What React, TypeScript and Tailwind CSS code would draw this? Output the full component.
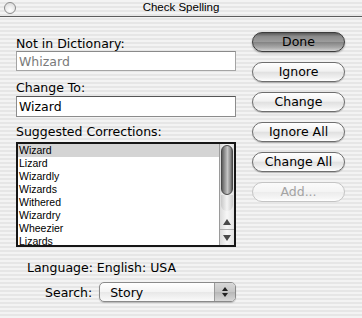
import React from "react";

const suggestions = ["Wizard", "Lizard", "Wizardly", "Wizards", "Withered", "Wizardry", "Wheezier", "Lizards"];

const font = "font-['DejaVu_Sans',sans-serif]";
const pin = "bg-[repeating-linear-gradient(180deg,#f3f3f3_0px,#f3f3f3_2px,#e6e6e6_2px,#e6e6e6_4px)]";

function AquaButton({ label, kind = "normal" }: { label: string; kind?: "default" | "normal" | "disabled" }) {
  const look =
    kind === "default"
      ? "border-[#3c3c3c] text-black bg-[linear-gradient(180deg,#5a5a5a_0%,#8c8c8c_20%,#9c9c9c_48%,#848484_52%,#a8a8a8_80%,#d2d2d2_100%)] shadow-[0_1px_2px_rgba(0,0,0,0.35)]"
      : kind === "disabled"
        ? "border-[#c4c4c4] text-[#a3a3a3] bg-[linear-gradient(180deg,#fbfbfb_0%,#f4f4f4_48%,#ececec_52%,#f6f6f6_85%,#ffffff_100%)]"
        : "border-[#6e6e6e] text-black bg-[linear-gradient(180deg,#ffffff_0%,#f1f1f1_45%,#e1e1e1_52%,#efefef_80%,#ffffff_100%)] shadow-[0_1px_1px_rgba(0,0,0,0.25)]";
  return (
    <div className={`h-[20px] w-[93px] rounded-full border flex items-center justify-center text-[12.5px] leading-none ${look}`}>
      {label}
    </div>
  );
}

export default function App() {
  return (
    <div className={`w-[362px] h-[318px] overflow-hidden ${pin} ${font} text-[12.5px] leading-[15px] text-black`}>
      {/* title bar */}
      <div className="relative h-[17px] border-b border-[#5c5c5c] flex items-center justify-center">
        <div className="absolute left-[4px] top-[2px] w-[12px] h-[12px] rounded-full border border-[#8a8a8a] bg-[radial-gradient(circle_at_50%_70%,#ffffff,#d6d6d6)]" />
        <span className="font-['Liberation_Sans',sans-serif] text-[11.5px] leading-none">Check Spelling</span>
      </div>

      <div className="flex">
        {/* left column */}
        <div className="ml-[16px] w-[220px] flex flex-col">
          <div className="mt-[19px]">Not in Dictionary:</div>
          <div className="h-[20px] border border-[#a4a4a4] border-t-[#8a8a8a] bg-white flex items-center pl-[2px] text-[#7a7a7a]">
            Whizard
          </div>
          <div className="mt-[9px] mb-[1px]">Change To:</div>
          <div className="h-[21px] border border-[#8c8c8c] border-t-[#555] bg-white flex items-center pl-[2px]">Wizard</div>
          <div className="mt-[7px] mb-[3px]">Suggested Corrections:</div>

          <div className="h-[105px] border-2 border-[#161616] bg-white flex overflow-hidden">
            <div className="flex-1 flex flex-col font-['Liberation_Sans',sans-serif] text-[10.5px] leading-[13px]">
              {suggestions.map((s, i) => (
                <div key={s} className={`h-[13px] pl-[1px] shrink-0 ${i === 0 ? "bg-[#d4d4d4]" : ""}`}>
                  {s}
                </div>
              ))}
            </div>
            {/* scrollbar */}
            <div className="w-[15px] border-l border-[#9a9a9a] flex flex-col bg-[linear-gradient(90deg,#dcdcdc,#f7f7f7_50%,#e2e2e2)]">
              <div className="mx-[1px] mt-[1px] h-[50px] rounded-full border border-[#4a4a4a] bg-[linear-gradient(90deg,#5e5e5e,#8e8e8e_25%,#c4c4c4_55%,#8a8a8a_85%,#5a5a5a)]" />
              <div className="mx-[1px] h-[16px] rounded-b-full bg-[linear-gradient(90deg,#c8c8c8,#f4f4f4_50%,#cacaca)]" />
              <div className="flex-1" />
              <div className="h-[15px] flex items-center justify-center">
                <svg width="8" height="6" viewBox="0 0 8 6">
                  <polygon points="4,0 8,6 0,6" fill="#4a4a4a" />
                </svg>
              </div>
              <div className="h-px bg-[#b0b0b0]" />
              <div className="h-[15px] flex items-center justify-center">
                <svg width="8" height="6" viewBox="0 0 8 6">
                  <polygon points="0,0 8,0 4,6" fill="#4a4a4a" />
                </svg>
              </div>
            </div>
          </div>

          <div className="mt-[13px] pl-[11px]">Language: English: USA</div>
          <div className="mt-[7px] flex items-center">
            <span className="ml-[29px] mr-[7px]">Search:</span>
            <div className="h-[20px] flex-1 rounded-[5px] border border-[#8a8a8a] flex overflow-hidden shadow-[0_1px_1px_rgba(0,0,0,0.2)] bg-[linear-gradient(180deg,#ffffff_0%,#f3f3f3_50%,#e8e8e8_52%,#fafafa_100%)]">
              <div className="flex-1 flex items-center pl-[10px]">Story</div>
              <div className="w-[21px] border-l border-[#9a9a9a] flex flex-col items-center justify-center gap-[2px] bg-[linear-gradient(180deg,#d8d8d8,#c6c6c6_50%,#b8b8b8_52%,#d8d8d8)]">
                <svg width="6" height="4" viewBox="0 0 6 4">
                  <polygon points="3,0 6,4 0,4" fill="#222" />
                </svg>
                <svg width="6" height="4" viewBox="0 0 6 4">
                  <polygon points="0,0 6,0 3,4" fill="#222" />
                </svg>
              </div>
            </div>
          </div>
        </div>

        {/* right column */}
        <div className="ml-[16px] mt-[15px] flex flex-col gap-[10px]">
          <AquaButton label="Done" kind="default" />
          <AquaButton label="Ignore" />
          <AquaButton label="Change" />
          <AquaButton label="Ignore All" />
          <AquaButton label="Change All" />
          <AquaButton label="Add..." kind="disabled" />
        </div>
      </div>
    </div>
  );
}
